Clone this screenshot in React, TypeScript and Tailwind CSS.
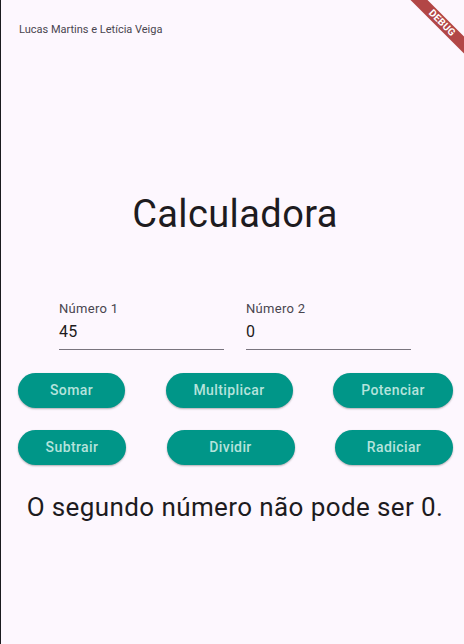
const font = { fontFamily: 'Roboto, "Noto Sans", sans-serif' }

function Field({ label, value }: { label: string; value: string }) {
  return (
    <div className="w-[165px] flex flex-col">
      <span className="text-[13px] leading-[16px] text-[#49454f] tracking-[0.3px]">{label}</span>
      <span className="mt-[5px] text-[16px] leading-[20px] text-[#1d1b20] tracking-[0.3px]">{value}</span>
      <div className="mt-[7px] h-px bg-[#79747e]" />
    </div>
  )
}

function Btn({ label, w }: { label: string; w: string }) {
  return (
    <button
      className={`${w} h-[35px] rounded-full bg-[#009688] text-[14px] font-medium text-[#b5e3dc] tracking-[0.4px] shadow-[0_1px_2px_rgba(0,0,0,0.3)]`}
    >
      {label}
    </button>
  )
}

export default function App() {
  return (
    <div
      style={font}
      className="relative w-[464px] h-[644px] overflow-hidden bg-[#fdf7fe] border-l border-[#1b1b1f]"
    >
      <div className="pt-[23px] pl-[18px] text-[11px] leading-[14px] text-[#49454f]">
        Lucas Martins e Letícia Veiga
      </div>

      <div className="pl-[5px] flex flex-col items-center">
        <h1 className="mt-[154px] text-[38px] leading-[46px] tracking-[0.4px] text-[#1d1b20]">Calculadora</h1>

        <div className="mt-[64px] flex gap-[22px]">
          <Field label="Número 1" value="45" />
          <Field label="Número 2" value="0" />
        </div>
      </div>

      <div className="mt-[23px] pl-[17px] pr-[11px] flex flex-col gap-[22px]">
        <div className="flex justify-between">
          <Btn label="Somar" w="w-[107px]" />
          <Btn label="Multiplicar" w="w-[127px]" />
          <Btn label="Potenciar" w="w-[120px]" />
        </div>
        <div className="flex justify-between">
          <Btn label="Subtrair" w="w-[108px]" />
          <Btn label="Dividir" w="w-[128px]" />
          <Btn label="Radiciar" w="w-[118px]" />
        </div>
      </div>

      <p className="mt-[26px] pl-[5px] text-center text-[26px] leading-[32px] tracking-[0.4px] text-[#1d1b20]">
        O segundo número não pode ser 0.
      </p>

      <div className="absolute left-[391px] top-[17px] w-[100px] h-[12px] rotate-45 bg-[#b24646] flex items-center justify-center">
        <span className="text-[10px] leading-[12px] font-bold text-white tracking-[0.2px]">DEBUG</span>
      </div>
    </div>
  )
}
